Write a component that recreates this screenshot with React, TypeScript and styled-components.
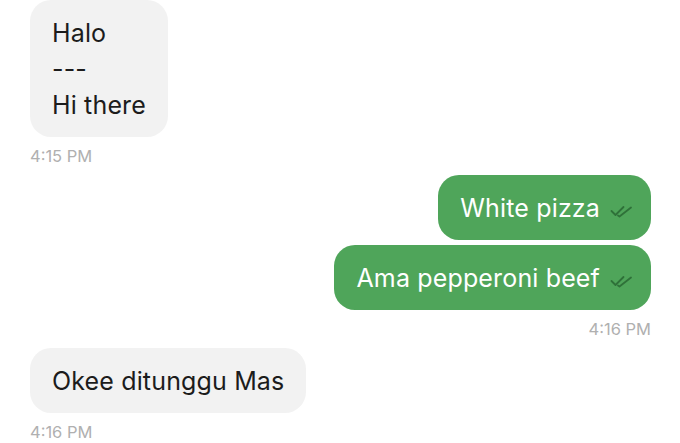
import React from 'react';
import styled, { createGlobalStyle } from 'styled-components';

const Global = createGlobalStyle`
  html, body { margin: 0; padding: 0; background: #fff; }
  body { font-family: Inter, "Liberation Sans", Arial, sans-serif; -webkit-font-smoothing: antialiased; }
`;

const Thread = styled.div`display:flex;flex-direction:column;gap:9px;padding:0 29px 0 30px;width:680px;box-sizing:border-box`;
const Group = styled.div<{ mine?: boolean }>`display:flex;flex-direction:column;align-items:${({mine})=>mine?'flex-end':'flex-start'};gap:5px`;
const Bubble = styled.div<{ mine?: boolean }>`
  display:flex;align-items:center;gap:10px;
  padding:15px 17px 14px 22px;
  padding-right:${({mine})=>mine?'17px':'22px'};
  border-radius:21px;
  background:${({mine})=>mine?'#4fa55a':'#f2f2f2'};
  color:${({mine})=>mine?'#fff':'#1c1c1c'};
  font-size:25px;line-height:36px;letter-spacing:0.15px;white-space:pre-line;
`;
const Time = styled.div`margin-top:4px;font-size:16.5px;line-height:20px;color:#b0b0b0`;
const Tick = styled.svg`flex:none;width:24px;height:14px;margin-top:6px`;

function DoubleCheck(){
  return (
    <Tick viewBox="0 0 24 14" fill="none" stroke="#2f7139" strokeWidth="1.8" strokeLinecap="round" strokeLinejoin="round">
      <path d="M1.5 7l4 4 8-8"/>
      <path d="M8 11.5l1.5 1L21 3.5"/>
    </Tick>
  );
}

interface Msg { text:string; }
interface G { mine?:boolean; msgs:Msg[]; time:string }

const groups:G[] = [
  { msgs:[{text:'Halo\n---\nHi there'}], time:'4:15 PM' },
  { mine:true, msgs:[{text:'White pizza'},{text:'Ama pepperoni beef'}], time:'4:16 PM' },
  { msgs:[{text:'Okee ditunggu Mas'}], time:'4:16 PM' },
];

export default function App(){
  return (
    <>
      <Global/>
      <Thread>
        {groups.map((g,i)=>(
          <Group key={i} mine={g.mine}>
            {g.msgs.map((m,j)=>(
              <Bubble key={j} mine={g.mine}>
                <span>{m.text}</span>
                {g.mine && <DoubleCheck/>}
              </Bubble>
            ))}
            <Time>{g.time}</Time>
          </Group>
        ))}
      </Thread>
    </>
  );
}
